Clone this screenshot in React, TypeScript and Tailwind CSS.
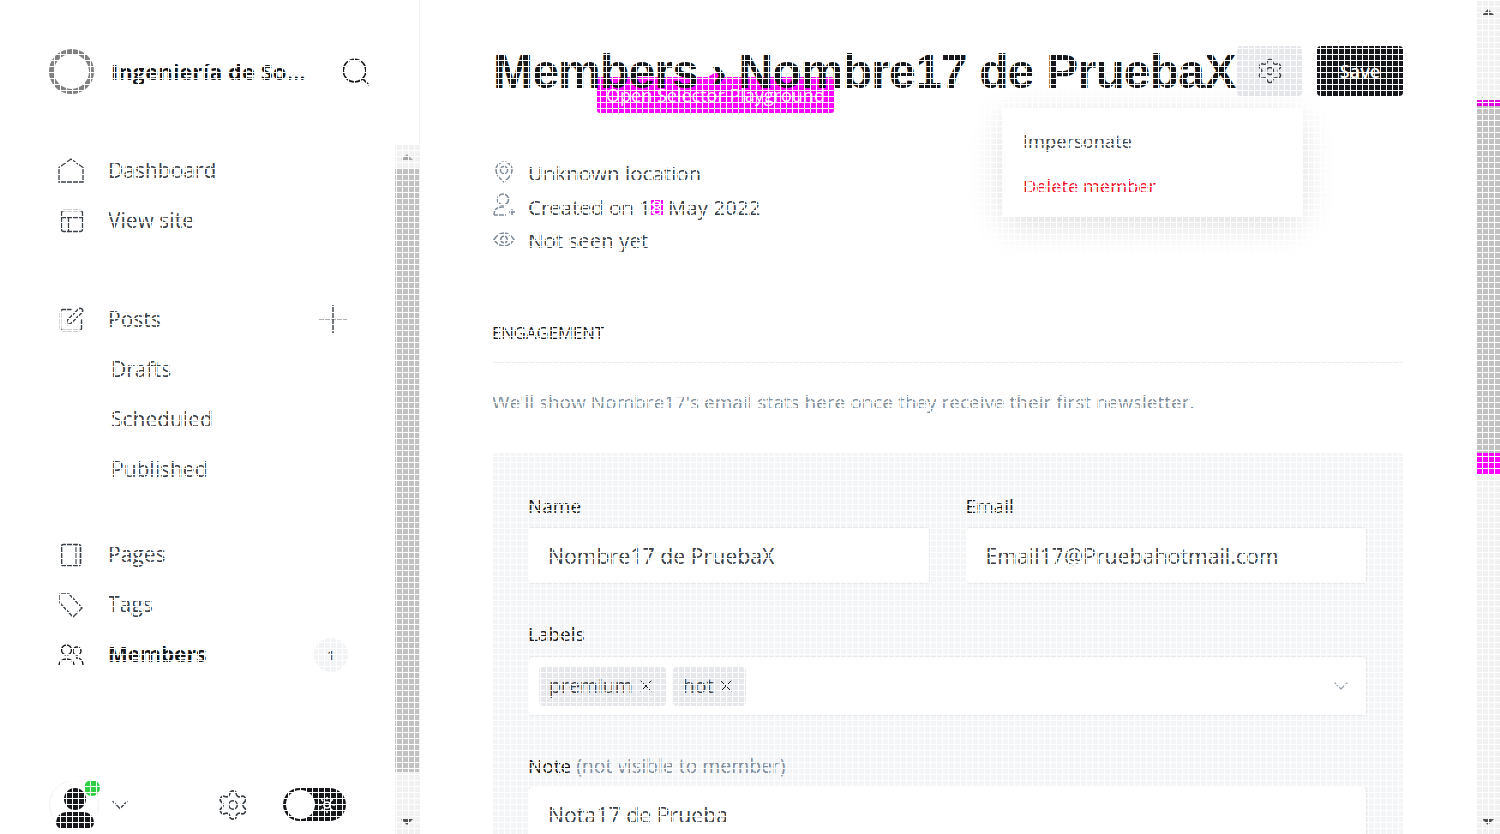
import type { ReactNode } from 'react'
import {
  ChevronDown,
  PanelsTopLeft,
  Search,
  Settings,
  SquarePen,
  Sun,
  X,
} from 'lucide-react'

const FONT = "font-['Open_Sans','Noto_Sans',sans-serif]"

function HomeIcon() {
  return (
    <svg viewBox="0 0 26 26" fill="none" stroke="#394047" strokeWidth="1.3" className="size-[26px]">
      <path d="M1 9.5 13 1l12 8.5V24H1z" />
    </svg>
  )
}

function PagesIcon() {
  return (
    <svg viewBox="0 0 24 24" fill="none" stroke="#394047" strokeWidth="1.7" className="size-[24px]">
      <rect x="3.5" y="1.5" width="19" height="21" rx="2" />
      <path d="M18 1.5v21" strokeWidth="1.1" />
    </svg>
  )
}

function TagIcon() {
  return (
    <svg viewBox="0 0 26 26" fill="none" stroke="#394047" strokeWidth="1.4" className="size-[26px]">
      <path d="M2 2h9l13 14-9 9L2 11z" strokeLinejoin="round" />
    </svg>
  )
}

function MembersIcon() {
  return (
    <svg viewBox="0 0 26 22" fill="none" stroke="#15171a" strokeWidth="1.4" className="h-[22px] w-[26px]">
      <circle cx="8.5" cy="6" r="5" />
      <circle cx="19" cy="7" r="4" />
      <path d="M1 21c0-8 15-8 15 0M18 14c4-.5 7 2.5 7 7" />
    </svg>
  )
}

function PlusIcon() {
  return (
    <svg viewBox="0 0 28 28" fill="none" stroke="#394047" className="mb-[2px] mr-[1px] size-[28px]">
      <path d="M14 0v28" strokeWidth="1.4" />
      <path d="M0 14h28" strokeWidth="0.8" />
    </svg>
  )
}

function LocationIcon() {
  return (
    <svg viewBox="0 0 18 22" fill="none" stroke="#7d8a98" strokeWidth="1.5" className="-mt-[2px] ml-[3px] h-[22px] w-[18px]">
      <path d="M9 21C5 18 1 14 1 9a8 8 0 0 1 16 0c0 5-4 9-8 12z" />
      <circle cx="9" cy="9" r="3.6" />
    </svg>
  )
}

function CreatedIcon() {
  return (
    <svg viewBox="0 0 23 23" fill="none" stroke="#7d8a98" strokeWidth="1.6" className="-mt-[5px] ml-[1px] size-[23px]">
      <circle cx="10" cy="6.5" r="5.5" />
      <path d="M1 22c0-5 3-8 8-8h2M1 22h12M19 16v6M16 19h6" />
    </svg>
  )
}

function EyeIcon() {
  return (
    <svg viewBox="0 0 22 15" fill="none" stroke="#7d8a98" strokeWidth="1.5" className="-mt-[1px] ml-[1px] h-[15px] w-[22px]">
      <path d="M1 7.5C4 3 7 1 11 1s7 2 10 6.5C18 12 15 14 11 14S4 12 1 7.5z" />
      <circle cx="11" cy="7.5" r="3.2" />
    </svg>
  )
}

function NavRow({
  icon,
  label,
  active,
  right,
}: {
  icon: ReactNode
  label: string
  active?: boolean
  right?: ReactNode
}) {
  return (
    <div className="flex h-[50px] items-center">
      <div className="flex w-[50px] items-center text-[#394047]">{icon}</div>
      <span className={`text-[21px] ${active ? 'font-bold text-[#15171a]' : 'text-[#394047]'}`}>{label}</span>
      <div className="ml-auto flex items-center">{right}</div>
    </div>
  )
}

function SubRow({ label }: { label: string }) {
  return <div className="flex h-[50px] items-center pl-[53px] text-[21px] text-[#394047]">{label}</div>
}

function Scrollbar({ children }: { children: ReactNode }) {
  return <div className="flex h-full w-[24px] shrink-0 flex-col bg-[#f1f1f1]">{children}</div>
}

function ArrowUp({ color = '#505050' }: { color?: string }) {
  return (
    <div className="flex h-[24px] items-center justify-center">
      <div className="h-0 w-0 border-x-[6px] border-b-[6px] border-x-transparent" style={{ borderBottomColor: color }} />
    </div>
  )
}

function ArrowDown() {
  return (
    <div className="mt-auto flex h-[24px] items-center justify-center">
      <div className="h-0 w-0 border-x-[6px] border-t-[6px] border-x-transparent border-t-[#505050]" />
    </div>
  )
}

function Sidebar() {
  return (
    <aside className="flex h-full w-[420px] shrink-0 flex-col border-r border-[#f1f1f1]">
      <div className="flex h-[145px] shrink-0 items-start pl-[49px] pt-[49px]">
        <div className="size-[45px] shrink-0 rounded-full border-[5px] border-[#808080] bg-white" />
        <span className="ml-[17px] mt-[6px] w-[197px] truncate text-[22px] font-bold text-[#15171a]">
          Ingeniería de Software
        </span>
        <Search className="ml-[31px] mt-[6px] size-[34px] text-[#15171a]" strokeWidth={1.1} />
      </div>
      <div className="flex min-h-0 flex-1">
        <div className="flex min-w-0 flex-1 flex-col pl-[58px] pr-[47px] pt-[1px]">
          <NavRow icon={<HomeIcon />} label="Dashboard" />
          <NavRow icon={<PanelsTopLeft className="size-[28px]" strokeWidth={1.1} />} label="View site" />
          <div className="h-[49px]" />
          <NavRow
            icon={<SquarePen className="-ml-[1px] size-[28px]" strokeWidth={1.2} />}
            label="Posts"
            right={<PlusIcon />}
          />
          <SubRow label="Drafts" />
          <SubRow label="Scheduled" />
          <SubRow label="Published" />
          <div className="h-[35px]" />
          <NavRow icon={<PagesIcon />} label="Pages" />
          <NavRow icon={<TagIcon />} label="Tags" />
          <NavRow
            icon={<MembersIcon />}
            label="Members"
            active
            right={
              <span className="flex size-[34px] items-center justify-center rounded-full bg-[#f1f3f4] text-[15px] text-[#394047]">
                1
              </span>
            }
          />
          <div className="mt-auto flex h-[54px] items-start pb-[4px]">
            <div className="relative -ml-[9px] size-[50px] rounded-full border border-[#eeeeee]">
              <div className="absolute left-[14px] top-[7px] size-[22px] rounded-full bg-[#15171a]" />
              <div className="absolute bottom-0 left-[6px] h-[17px] w-[38px] rounded-t-[19px] rounded-b-[12px] bg-[#15171a]" />
              <div className="absolute -right-[2px] -top-[1px] size-[16px] rounded-full bg-[#30cf43]" />
            </div>
            <ChevronDown className="ml-[7px] mt-[11px] size-[28px] text-[#394047]" strokeWidth={1.1} />
            <Settings className="ml-[82px] mt-[8px] size-[34px] text-[#394047]" strokeWidth={1.15} />
            <div className="ml-[33px] mt-[8px] flex h-[33px] w-[63px] items-center justify-between rounded-full bg-[#15171a] pl-[3px] pr-[10px]">
              <div className="size-[29px] rounded-full bg-white" />
              <Sun className="size-[18px] text-white" strokeWidth={2.2} />
            </div>
          </div>
        </div>
        <Scrollbar>
          <ArrowUp color="#a3a3a3" />
          <div className="h-[603px] bg-[#c1c1c1]" />
          <ArrowDown />
        </Scrollbar>
      </div>
    </aside>
  )
}

function MetaRow({ icon, children, h }: { icon: ReactNode; children: ReactNode; h: string }) {
  return (
    <div className={`flex items-center ${h}`}>
      <div className="flex w-[36px]">{icon}</div>
      <span className="text-[20.5px] text-[#394047]">{children}</span>
    </div>
  )
}

function FieldLabel({ children, className }: { children: ReactNode; className: string }) {
  return <div className={`h-[25px] text-[19px] font-medium leading-[25px] text-[#15171a] ${className}`}>{children}</div>
}

function Field({ label, value, className }: { label: ReactNode; value: string; className?: string }) {
  return (
    <div className={className}>
      <FieldLabel className="mb-[8px]">{label}</FieldLabel>
      <div className="flex h-[57px] items-center rounded-[4px] border border-[#e5e7ea] bg-white px-[19px] text-[21.3px] text-[#394047]">
        {value}
      </div>
    </div>
  )
}

function Chip({ label }: { label: string }) {
  return (
    <span className="flex h-[39px] items-center gap-[3px] rounded-[4px] bg-[#e5e7ea] px-[10px] text-[19.5px] text-[#394047]">
      {label}
      <X className="size-[20px] text-[#15171a]" strokeWidth={1.2} />
    </span>
  )
}

function Main() {
  return (
    <main className="relative min-w-0 flex-1 overflow-hidden pl-[72px] pr-[73px] pt-[46px]">
      <div className="relative flex h-[50px] items-center">
        {/* Selector playground hint, the title is painted over it */}
        <div className="absolute left-[105px] top-[31px] flex h-[36px] w-[237px] items-center justify-center rounded-[3px] bg-[#ff00ff] text-[18px] text-white">
          Open Selector Playground
        </div>
        <div className="absolute left-[216px] top-[26px] h-0 w-0 border-x-[8px] border-b-[5px] border-x-transparent border-b-[#ff00ff]" />
        <h1 className="relative z-[1] min-w-0 whitespace-nowrap pl-[1px] pt-[2px] font-['Liberation_Sans',sans-serif] text-[48px] font-bold tracking-[-0.8px] text-[#15171a]">
          Members › Nombre17 de PruebaX
        </h1>
        <div className="ml-auto flex shrink-0 gap-[15px]">
          <button type="button" className="flex h-[50px] w-[65px] items-center justify-center rounded-[4px] bg-[#e5e7ea]">
            <Settings className="size-[28px] text-[#394047]" strokeWidth={1.2} />
          </button>
          <button type="button" className="h-[50px] w-[86px] rounded-[4px] bg-[#15171a] text-[18px] font-semibold text-white">
            Save
          </button>
        </div>
        <div className="absolute right-[101px] top-[63px] z-10 flex h-[108px] w-[300px] flex-col justify-center gap-[17px] rounded-[4px] bg-white pl-[21px] text-[18.3px] shadow-[0_8px_36px_rgba(0,0,0,0.14)]">
          <span className="text-[#394047]">Impersonate</span>
          <span className="text-[#f50b23]">Delete member</span>
        </div>
      </div>

      <div className="mt-[59px]">
        <MetaRow h="h-[36px]" icon={<LocationIcon />}>
          Unknown location
        </MetaRow>
        <MetaRow h="h-[32px]" icon={<CreatedIcon />}>
          Created on 1
          <span className="inline-block h-[15px] bg-[#ff00ff] leading-[15px] text-white">8</span> May 2022
        </MetaRow>
        <MetaRow h="h-[34px]" icon={<EyeIcon />}>
          Not seen yet
        </MetaRow>
      </div>

      <div className="mt-[64px] border-b border-[#ebeef0] pb-[17px] text-[16.7px] font-medium leading-[24px] text-[#15171a]">
        ENGAGEMENT
      </div>
      <p className="mt-[27px] text-[19px] leading-[25px] text-[#7c8b9a]">
        We&apos;ll show Nombre17&apos;s email stats here once they receive their first newsletter.
      </p>

      <section className="mt-[38px] rounded-[4px] bg-[#f4f5f6] px-[36px] pb-[60px] pt-[41px]">
        <div className="grid grid-cols-2 gap-x-[36px]">
          <Field label="Name" value="Nombre17 de PruebaX" />
          <Field label="Email" value="Email17@Pruebahotmail.com" />
        </div>
        <div className="mt-[38px]">
          <FieldLabel className="mb-[9px]">Labels</FieldLabel>
          <div className="flex h-[60px] items-center gap-[7px] rounded-[4px] border border-[#e5e7ea] bg-white pl-[10px] pr-[13px]">
            <Chip label="premium" />
            <Chip label="hot" />
            <ChevronDown className="ml-auto size-[24px] text-[#8e9cac]" strokeWidth={1.1} />
          </div>
        </div>
        <Field
          className="mt-[37px]"
          label={
            <>
              Note <span className="text-[19.4px] font-normal text-[#7c8b9a]">(not visible to member)</span>
            </>
          }
          value="Nota17 de Prueba"
        />
      </section>
    </main>
  )
}

export default function App() {
  return (
    <div className={`relative flex h-[834px] w-[1500px] overflow-hidden bg-white ${FONT}`}>
      <Sidebar />
      <Main />
      <Scrollbar>
        <ArrowUp />
        <div className="h-[76px]" />
        <div className="h-[6px] bg-[#e000e0]" />
        <div className="h-[347px] bg-[#c1c1c1]" />
        <div className="h-[22px] bg-[#ff00ff]" />
        <ArrowDown />
      </Scrollbar>
      {/* 6px white mesh that covers the whole reference picture */}
      <div className="pointer-events-none absolute inset-0 z-20 bg-[linear-gradient(to_right,#fff_1px,transparent_1px),linear-gradient(to_bottom,#fff_1px,transparent_1px)] bg-[size:6px_6px]" />
    </div>
  )
}
